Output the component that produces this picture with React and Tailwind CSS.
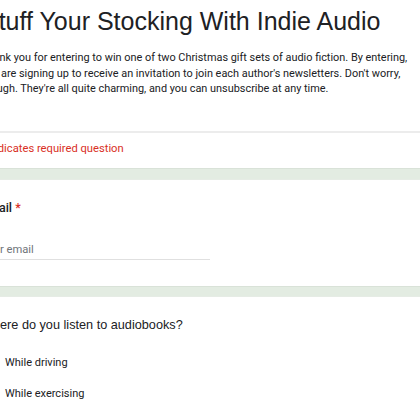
import React from 'react';

const Band = ({ h = 'h-[12px]' }) => (
  <div className={`${h} bg-[#e3ece2] border-t border-[#d9e2d8] border-b border-b-[#e6ece5]`} />
);

export default function App() {
  return (
    <div className="w-[420px] h-[420px] overflow-hidden bg-white font-['Roboto',sans-serif] text-[#202124]">
      <div className="ml-[-19px] w-[470px]">
        <div className="pt-[5px]">
          <h1 className="ml-[1px] font-['Liberation_Sans',Arial,sans-serif] text-[25px] leading-[32px] whitespace-nowrap text-[#202124]">
            Stuff Your Stocking With Indie Audio
          </h1>
          <p className="mt-[13px] text-[10.9px] leading-[15.5px] whitespace-nowrap text-[#202124]">
            Thank you for entering to win one of two Christmas gift sets of audio fiction. By entering,
            <br />
            you are signing up to receive an invitation to join each author's newsletters. Don't worry,
            <br />
            though. They're all quite charming, and you can unsubscribe at any time.
          </p>
          <div className="mt-[34.5px] h-[2px] bg-[#ececec]" />
          <div className="pt-[8px] pb-[11px] text-[11.2px] leading-[16px] text-[#d93025]">
            * Indicates required question
          </div>
        </div>
        <Band />
        <div className="pt-[19px] h-[106px]">
          <div className="text-[12.5px] leading-[18px] font-medium text-[#202124]">
            Email <span className="text-[#d93025]">*</span>
          </div>
          <div className="mt-[25px] w-[229px] border-b border-[#e0e0e0] pb-[1px] text-[11.2px] leading-[16px] text-[#70757a]">
            Your email
          </div>
        </div>
        <Band h="h-[11px]" />
        <div className="pt-[19px]">
          <div className="font-['Liberation_Sans',Arial,sans-serif] text-[12.7px] leading-[18px] text-[#202124]">
            Where do you listen to audiobooks?
          </div>
          <div className="mt-[19px] flex flex-col gap-[11px]">
            {['While driving', 'While exercising'].map((o) => (
              <label key={o} className="flex items-center gap-[8px] h-[20px]">
                <span className="w-[16px] h-[16px] border-2 border-[#5f6368] rounded-[2px]" />
                <span className="text-[11px] leading-[20px] text-[#202124]">{o}</span>
              </label>
            ))}
          </div>
        </div>
      </div>
    </div>
  );
}
